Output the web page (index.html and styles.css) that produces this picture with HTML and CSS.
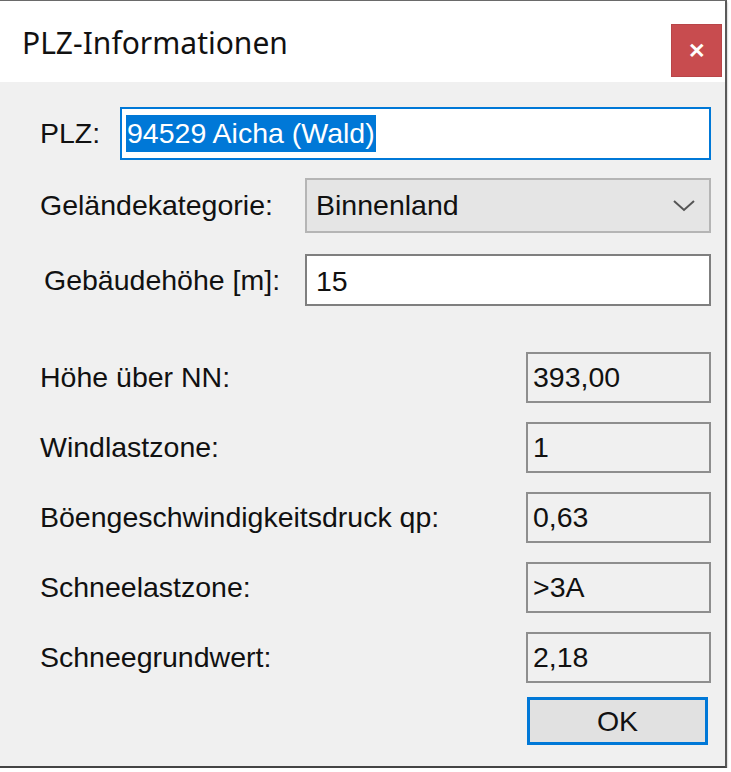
FILE: index.html
```html
<!DOCTYPE html>
<html>
<head>
    <title>PLZ-Informationen</title>
    <link rel="stylesheet" href="styles.css">
</head>
<body>
    <div class="window">
        <div class="titlebar">
            <span class="title">PLZ-Informationen</span>
            <button type="button" class="close">&#x2715;</button>
        </div>
        <div class="content">
            <div class="row row-plz">
                <label class="label" for="plz">PLZ:</label>
                <div class="field field-focus"><span class="selected">94529 Aicha (Wald)</span></div>
            </div>
            <div class="row row-combo">
                <label class="label label-wide">Geländekategorie:</label>
                <div class="combo">
                    <span>Binnenland</span>
                    <svg class="chevron" width="22" height="12" viewBox="0 0 22 12">
                        <polyline points="1,1 11,10 21,1" fill="none" stroke="#555" stroke-width="2"/>
                    </svg>
                </div>
            </div>
            <div class="row row-height">
                <label class="label label-wide label-indent">Gebäudehöhe [m]:</label>
                <div class="field field-plain">15</div>
            </div>

            <div class="results">
                <div class="row result">
                    <span class="label">Höhe über NN:</span>
                    <div class="readonly">393,00</div>
                </div>
                <div class="row result">
                    <span class="label">Windlastzone:</span>
                    <div class="readonly">1</div>
                </div>
                <div class="row result">
                    <span class="label">Böengeschwindigkeitsdruck qp:</span>
                    <div class="readonly">0,63</div>
                </div>
                <div class="row result">
                    <span class="label">Schneelastzone:</span>
                    <div class="readonly">&gt;3A</div>
                </div>
                <div class="row result">
                    <span class="label">Schneegrundwert:</span>
                    <div class="readonly">2,18</div>
                </div>
            </div>

            <div class="actions">
                <button type="button" class="ok">OK</button>
            </div>
        </div>
    </div>
</body>
</html>
```

FILE: styles.css
```css
body {
    margin: 0;
    background: #fff;
    font-family: "Liberation Sans", Arial, sans-serif;
    color: #111;
}

.window {
    width: 727px;
    height: 768px;
    border-top: 1px solid #6a6a6a;
    border-right: 2px solid #5a5a5a;
    border-bottom: 2px solid #444;
    box-shadow: 0 2px 2px rgba(0, 0, 0, 0.35);
    display: flex;
    flex-direction: column;
    box-sizing: border-box;
}

.titlebar {
    height: 81px;
    background: #fff;
    display: flex;
    align-items: flex-start;
    padding-left: 22px;
    flex-shrink: 0;
}

.title {
    font-family: "Noto Sans", "Open Sans", sans-serif;
    font-size: 30px;
    margin-top: 21px;
    color: #111;
}

.close {
    margin-left: auto;
    margin-top: 23px;
    margin-right: 3px;
    width: 51px;
    height: 53px;
    background: #c84c4f;
    border: 1px solid #b84548;
    color: #fff;
    font-size: 21px;
    font-weight: bold;
    padding: 0;
}

.content {
    flex: 1;
    background: #f0f0f0;
    padding: 25px 14px 0 40px;
    font-size: 28.5px;
}

.row {
    display: flex;
    align-items: center;
}

.label {
    flex-shrink: 0;
}

.row-plz .label {
    width: 80px;
}

.label-wide {
    width: 265px;
}

.label-indent {
    padding-left: 4px;
    width: 261px;
}

.field {
    flex: 1;
    background: #fff;
    box-sizing: border-box;
    display: flex;
    align-items: center;
}

.field-focus {
    height: 53px;
    border: 2px solid #0078d7;
    padding-left: 4px;
}

.selected {
    background: #0078d7;
    color: #fff;
    padding: 2px 1px;
}

.row-combo {
    margin-top: 18px;
}

.combo {
    flex: 1;
    height: 55px;
    background: #e5e5e5;
    border: 2px solid #b5b5b5;
    box-sizing: border-box;
    display: flex;
    align-items: center;
    padding: 0 14px 0 9px;
}

.chevron {
    margin-left: auto;
}

.row-height {
    margin-top: 21px;
}

.field-plain {
    height: 52px;
    border: 2px solid #7f7f7f;
    padding-left: 9px;
    padding-top: 3px;
}

.results {
    margin-top: 46px;
    display: flex;
    flex-direction: column;
    gap: 19px;
}

.result .label {
    width: 486px;
}

.readonly {
    flex: 1;
    height: 51px;
    border: 2px solid #8e8e8e;
    background: #f0f0f0;
    box-sizing: border-box;
    display: flex;
    align-items: center;
    padding-left: 5px;
}

.actions {
    display: flex;
    justify-content: flex-end;
    margin-top: 14px;
    padding-right: 3px;
}

.ok {
    width: 181px;
    height: 48px;
    background: #e1e1e1;
    border: 3px solid #0078d7;
    font-family: "Liberation Sans", Arial, sans-serif;
    font-size: 28.5px;
    color: #111;
    padding: 0;
}
```
